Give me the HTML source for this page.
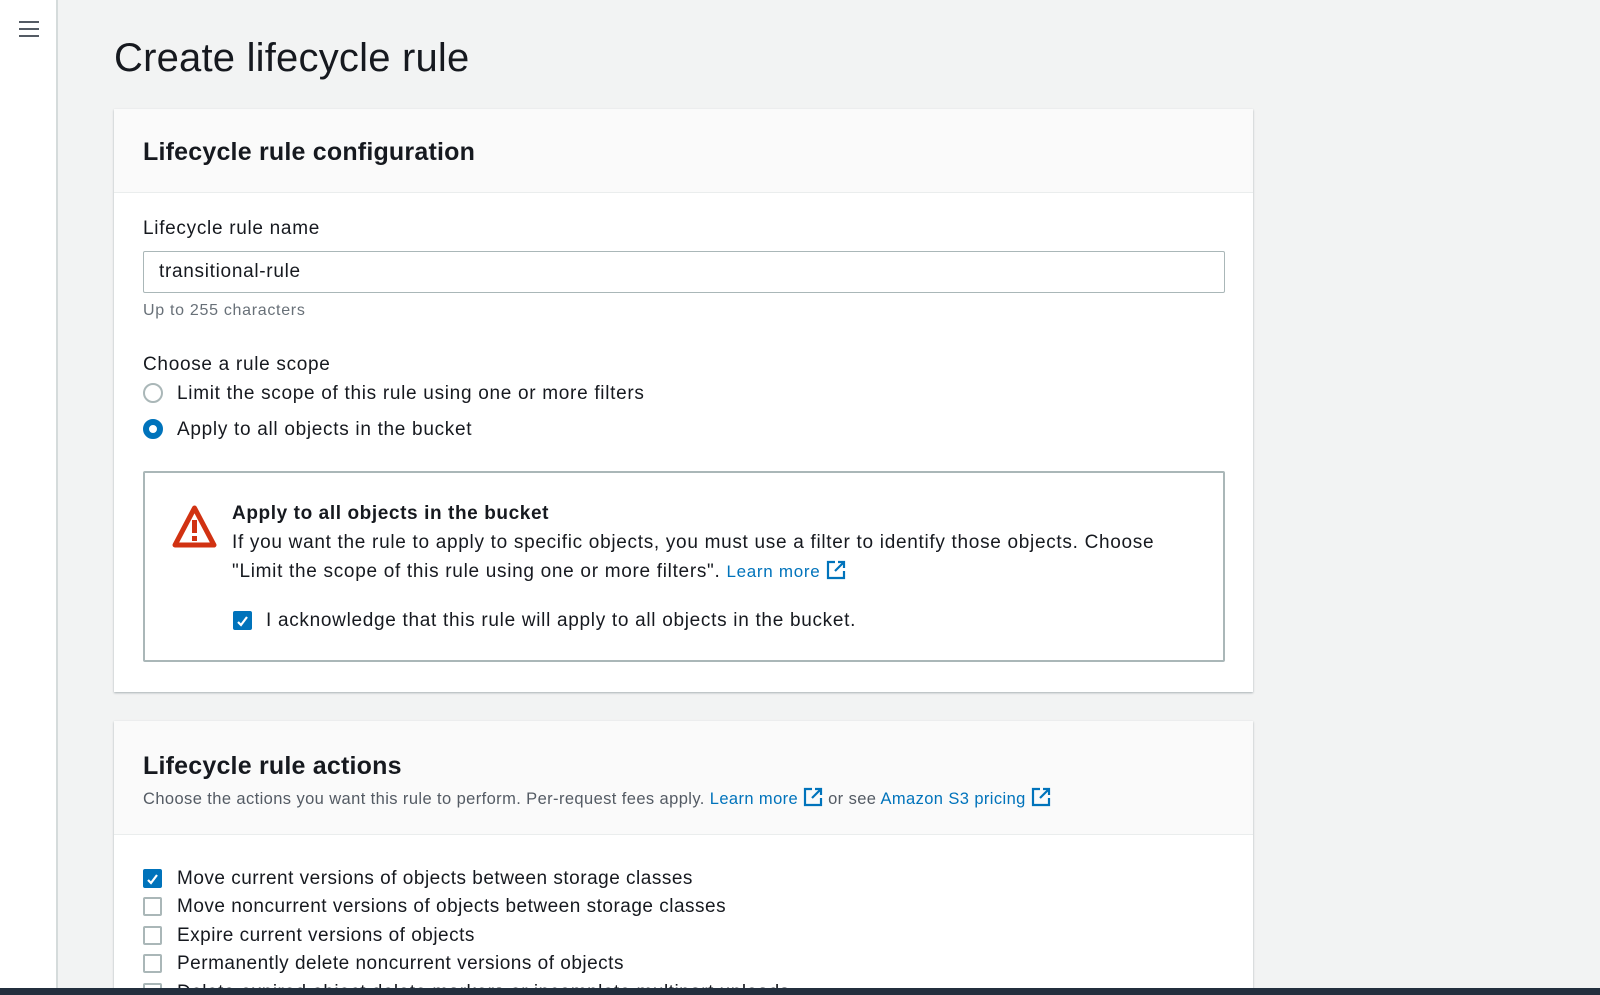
<!DOCTYPE html>
<html><head><meta charset="utf-8">
<style>
*{box-sizing:border-box;margin:0;padding:0}
html,body{width:1600px;height:995px;overflow:hidden}
body{background:#f2f3f3;font-family:"Liberation Sans",sans-serif;color:#16191f;position:relative;font-size:19px;letter-spacing:0.7px}
.wrap{position:absolute;left:0;top:0;width:1600px;height:995px;overflow:hidden}
.side{position:absolute;left:0;top:0;width:58px;height:995px;background:#fff;border-right:2px solid #d5dbdb}
.abs{position:absolute;white-space:nowrap}
.card{position:absolute;left:114px;width:1139px;background:#fff;box-shadow:0 1px 2px rgba(0,28,36,.3);}
.hdr{background:#fafafa;border-bottom:1px solid #eaeded;position:absolute;left:0;right:0;top:0}
h1{font-weight:400;font-size:40px;letter-spacing:0.2px}
h2{font-size:25px;font-weight:700;letter-spacing:0.2px}
a{color:#0073bb;text-decoration:none}
.radio{position:absolute;width:20px;height:20px;border-radius:50%;border:2px solid #aab7b8;background:#fff}
.radio.on{border:6px solid #0073bb}
.cb{position:absolute;width:19px;height:19px;border:2px solid #aab7b8;border-radius:2px;background:#fff}
.cb.on{background:#0073bb;border-color:#0073bb}
.bar{position:absolute;left:0;top:988px;width:1600px;height:7px;background:#232f3e;z-index:5}
.li{letter-spacing:0.5px}
</style></head><body><div class="wrap">
<div class="side">
<svg style="position:absolute;left:18px;top:20px" width="22" height="18"><path d="M1 2h20M1 9h20M1 16h20" stroke="#545b64" stroke-width="2"/></svg>
</div>
<h1 class="abs" style="left:114px;top:36px">Create lifecycle rule</h1>

<div class="card" style="top:109px;height:583px">
 <div class="hdr" style="height:84px"><h2 class="abs" style="left:29px;top:29px">Lifecycle rule configuration</h2></div>
 <div class="abs" style="left:29px;top:109px">Lifecycle rule name</div>
 <div class="abs" style="left:29px;top:142px;width:1082px;height:42px;border:1px solid #aab7b8;border-radius:2px;padding:9px 15px">transitional-rule</div>
 <div class="abs" style="left:29px;top:193px;font-size:16px;color:#687078;letter-spacing:0.7px">Up to 255 characters</div>
 <div class="abs" style="left:29px;top:245px">Choose a rule scope</div>
 <div class="radio" style="left:29px;top:274px"></div>
 <div class="abs" style="left:63px;top:274px">Limit the scope of this rule using one or more filters</div>
 <div class="radio on" style="left:29px;top:310px"></div>
 <div class="abs" style="left:63px;top:310px">Apply to all objects in the bucket</div>
 <div class="abs" style="left:29px;top:362px;width:1082px;height:191px;border:2px solid #aab7b8;border-radius:2px"></div>
 <svg class="abs" style="left:57px;top:395px" width="47" height="46" viewBox="0 0 47 46"><path d="M23.5 4L43 41H4Z" fill="none" stroke="#d13212" stroke-width="5" stroke-linejoin="round"/><rect x="21" y="16" width="5" height="13" fill="#d13212"/><rect x="21" y="32" width="5" height="5" fill="#d13212"/></svg>
 <div class="abs" style="left:118px;top:394px;font-weight:700;letter-spacing:0.6px">Apply to all objects in the bucket</div>
 <div class="abs" style="left:118px;top:423px">If you want the rule to apply to specific objects, you must use a filter to identify those objects. Choose</div>
 <div class="abs" style="left:118px;top:451px">"Limit the scope of this rule using one or more filters". <a style="font-size:17px">Learn more</a> <svg width="20" height="20" viewBox="0 0 20 20" style="vertical-align:-3px"><path d="M9 2H2v16h16v-7M12 2h6v6M18 2l-9 9" fill="none" stroke="#0073bb" stroke-width="2.2"/></svg></div>
 <div class="cb on" style="left:119px;top:502px"><svg width="15" height="15" viewBox="0 0 15 15"><path d="M3 8l3 3 6-8" fill="none" stroke="#fff" stroke-width="2.2"/></svg></div>
 <div class="abs" style="left:152px;top:501px">I acknowledge that this rule will apply to all objects in the bucket.</div>
</div>

<div class="card" style="top:721px;height:300px">
 <div class="hdr" style="height:114px">
  <h2 class="abs" style="left:29px;top:31px">Lifecycle rule actions</h2>
  <div class="abs" style="left:29px;top:66px;font-size:16.5px;color:#545b64;letter-spacing:0.4px">Choose the actions you want this rule to perform. Per-request fees apply. <a>Learn more</a> <svg width="20" height="20" viewBox="0 0 20 20" style="vertical-align:-3px"><path d="M9 2H2v16h16v-7M12 2h6v6M18 2l-9 9" fill="none" stroke="#0073bb" stroke-width="2.2"/></svg> or see <a>Amazon S3 pricing</a> <svg width="20" height="20" viewBox="0 0 20 20" style="vertical-align:-3px"><path d="M9 2H2v16h16v-7M12 2h6v6M18 2l-9 9" fill="none" stroke="#0073bb" stroke-width="2.2"/></svg></div>
 </div>
 <div class="cb on" style="left:29px;top:148px"><svg width="15" height="15" viewBox="0 0 15 15"><path d="M3 8l3 3 6-8" fill="none" stroke="#fff" stroke-width="2.2"/></svg></div>
 <div class="abs li" style="left:63px;top:147px">Move current versions of objects between storage classes</div>
 <div class="cb" style="left:29px;top:176px"></div>
 <div class="abs li" style="left:63px;top:175px">Move noncurrent versions of objects between storage classes</div>
 <div class="cb" style="left:29px;top:205px"></div>
 <div class="abs li" style="left:63px;top:204px">Expire current versions of objects</div>
 <div class="cb" style="left:29px;top:233px"></div>
 <div class="abs li" style="left:63px;top:232px">Permanently delete noncurrent versions of objects</div>
 <div class="cb" style="left:29px;top:262px"></div>
 <div class="abs li" style="left:63px;top:261px">Delete expired object delete markers or incomplete multipart uploads</div>
</div>
<div class="bar"></div>
</div></body></html>
